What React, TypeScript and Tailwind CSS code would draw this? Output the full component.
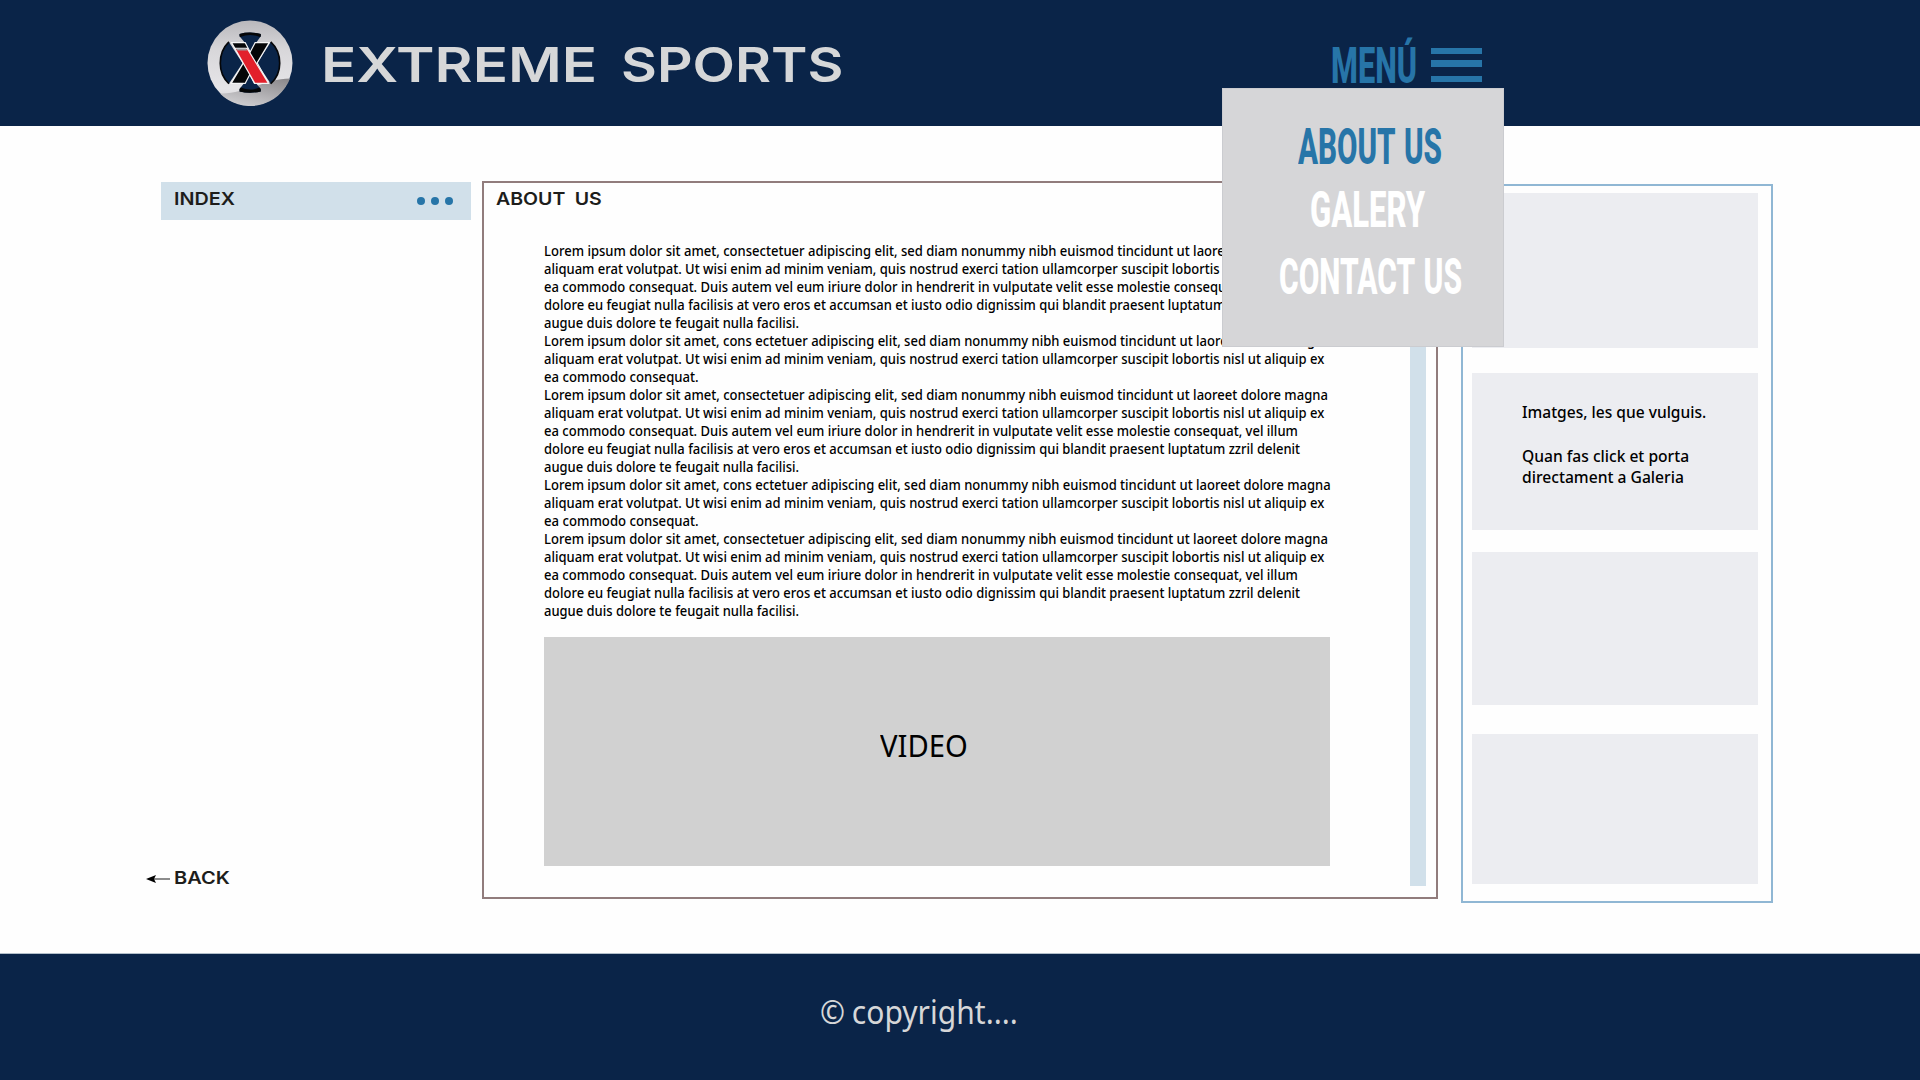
import { useLayoutEffect, useRef, useState } from "react";
import clsx from "clsx";

/** One line of text, stretched or condensed to fill the given width. */
function Fit({ width, className, children }: { width: number; className?: string; children: string }) {
  const ref = useRef<HTMLSpanElement>(null);
  const [scale, setScale] = useState(1);
  useLayoutEffect(() => {
    if (ref.current) setScale(width / ref.current.offsetWidth);
  }, [width]);
  return (
    <div className={clsx("shrink-0 whitespace-nowrap", className)} style={{ width }}>
      <span ref={ref} className="inline-block origin-left align-top" style={{ transform: `scaleX(${scale})` }}>
        {children}
      </span>
    </div>
  );
}

function Logo() {
  return (
    <svg viewBox="52 60 257 259" className="h-[86px] w-[86px] shrink-0">
      <defs>
        <linearGradient id="ball" x1="0" y1="0" x2="0" y2="1">
          <stop offset="0" stopColor="#b9b8bc" />
          <stop offset="0.35" stopColor="#d8d7da" />
          <stop offset="0.8" stopColor="#e6e5e8" />
          <stop offset="1" stopColor="#d0cfd2" />
        </linearGradient>
        <linearGradient id="shade" x1="0.9" y1="0" x2="0.3" y2="1">
          <stop offset="0" stopColor="#8b898c" />
          <stop offset="1" stopColor="#cfced1" />
        </linearGradient>
      </defs>
      <circle cx="180.500" cy="189.500" r="128" fill="url(#ball)" />
      <path d="M90 281C160 285 230 236 301 236A128 128 0 0 1 90 281Z" fill="url(#shade)" />
      <path d="M149 102Q180 94 213 102V109L200 127L184 156H178L164 127L149 109Z" fill="#0a2448" />
      <path d="M149 102Q180 94 213 102V109L211 111Q181 99 151 111L149 109Z" fill="#050608" />
      <path d="M149 275Q180 283 213 275V268L198 250L184 222H178L163 250L149 268Z" fill="#0a2448" />
      <path d="M149 275Q180 283 213 275V268L209 263Q181 276 153 263L149 268Z" fill="#050608" />
      <path d="M117 126Q91 151 91 190Q91 227 117 252L158 190Z" fill="#0a2448" />
      <path d="M243 126Q270 151 270 190Q270 227 243 252L202 190Z" fill="#0a2448" />
      <path d="M117 126Q91 151 91 190Q91 227 117 252" fill="none" stroke="#050608" strokeWidth="5" />
      <path d="M243 126Q270 151 270 190Q270 227 243 252" fill="none" stroke="#050608" strokeWidth="5" />
      <path
        d="M128 130H165L181 160L197 130H235L200 189L233 249H195L180 220L165 249H127L163 189Z"
        fill="#050608"
        stroke="#f4f4f5"
        strokeWidth="7"
        className="[paint-order:stroke]"
      />
      <path d="M138 147H171L233 249H196Z" fill="#e2202b" stroke="#f4f4f5" strokeWidth="7" className="[paint-order:stroke]" />
      <path d="M138 146H169L172 152H142Z" fill="#9a9a9d" />
    </svg>
  );
}

const P = [
  { t: "Lorem ipsum dolor sit amet, consectetuer adipiscing elit, sed diam nonummy nibh euismod tincidunt ut laoreet dolore magna", w: 784 },
  { t: "aliquam erat volutpat. Ut wisi enim ad minim veniam, quis nostrud exerci tation ullamcorper suscipit lobortis nisl ut aliquip ex", w: 780 },
  { t: "ea commodo consequat. Duis autem vel eum iriure dolor in hendrerit in vulputate velit esse molestie consequat, vel illum", w: 754 },
  { t: "dolore eu feugiat nulla facilisis at vero eros et accumsan et iusto odio dignissim qui blandit praesent luptatum zzril delenit", w: 756 },
  { t: "augue duis dolore te feugait nulla facilisi.", w: 255 },
];
const Q = [
  { t: "Lorem ipsum dolor sit amet, cons ectetuer adipiscing elit, sed diam nonummy nibh euismod tincidunt ut laoreet dolore magna", w: 787 },
  P[1],
  { t: "ea commodo consequat.", w: 155 },
];
const LINES = [...P, ...Q, ...P, ...Q, ...P];

export default function App() {
  return (
    <div className="relative flex h-[1080px] w-[1920px] flex-col overflow-hidden bg-[#fefefe] font-['Noto_Sans',sans-serif] text-black">
      <header className="flex h-[126px] shrink-0 items-start bg-[#0a2448] pl-[207px] pt-5">
        <Logo />
        <h1 className="ml-[28px] mt-[21px] flex w-[522px] justify-between font-['Inter',sans-serif] text-[48px] font-semibold leading-[48px] text-[#d6d7d8]">
          <Fit width={276}>EXTREME</Fit>{" "}
          <Fit width={222}>SPORTS</Fit>
        </h1>
        <div className="ml-[488px] mt-[21px] flex items-start text-[#2775a8]">
          <Fit width={86} className="pt-px font-['Roboto',sans-serif] text-[50px] font-extrabold leading-[48px]">MENÚ</Fit>
          <div className="ml-[14px] mt-[7px] flex w-[51px] flex-col">
            <div className="h-[6px] bg-[#2775a8]" />
            <div className="mt-[6px] h-[7px] bg-[#2775a8]" />
            <div className="mt-[9px] h-[6px] bg-[#2775a8]" />
          </div>
        </div>
      </header>

      <main className="flex h-[827px] shrink-0 items-start pl-[146px]">
        <aside className="flex h-[762px] w-[325px] shrink-0 flex-col justify-between pt-[56px]">
          <div className="ml-[15px] flex h-[38px] items-start justify-between bg-[#d1e0ea] pl-[13px] pr-[18px]">
            <Fit width={61} className="mt-[7px] font-['Inter',sans-serif] text-[17.500px] font-semibold leading-5 text-[#1d1d1b]">INDEX</Fit>
            <div className="mt-[15px] flex gap-[6px]">
              {[0, 1, 2].map((n) => (
                <div key={n} className="h-2 w-2 rounded-full bg-[#2775a8]" />
              ))}
            </div>
          </div>
          <div className="flex items-start">
            <svg viewBox="0 0 24 10" className="mt-[6px] h-[10px] w-6">
              <path d="M8 5H24" stroke="#666" strokeWidth="1.500" />
              <path d="M0 5L10 1L8 5L10 9Z" fill="#000" />
            </svg>
            <Fit width={56} className="ml-1 font-['Inter',sans-serif] text-[17.500px] font-semibold leading-5 text-[#1d1d1b]">BACK</Fit>
          </div>
        </aside>

        <section className="ml-[11px] mt-[55px] flex h-[718px] w-[956px] shrink-0 border-2 border-[#917c7c]">
          <div className="w-[846px] pl-[12px]">
            <Fit width={106} className="mt-[6px] font-['Inter',sans-serif] text-[17.500px] font-semibold leading-5 text-[#1d1d1b] [word-spacing:4px]">
              ABOUT US
            </Fit>
            <div className="ml-[48px] mt-[32px] w-[790px] text-[14.500px] font-medium leading-[18px]">
              {LINES.map((l, i) => (
                <Fit key={i} width={l.w}>{l.t}</Fit>
              ))}
            </div>
            <div className="ml-[48px] mt-[18px] flex h-[229px] w-[786px] items-start bg-[#d1d1d1] pl-[336px] pt-[88px]">
              <Fit width={88} className="text-[31.500px] leading-[40px]">VIDEO</Fit>
            </div>
          </div>
          <div className="ml-[80px] mt-[12px] h-[691px] w-4 bg-[#d1e0ea]" />
        </section>

        <aside className="ml-[23px] mt-[58px] flex h-[719px] w-[312px] shrink-0 flex-col border-2 border-[#90b7d4] pl-[9px] pt-[7px]">
          <div className="h-[155px] w-[286px] bg-[#ecedf1]" />
          <div className="mt-[25px] h-[157px] w-[286px] bg-[#ecedf1] pl-[50px] pt-[28px] text-[17px] font-medium leading-[22px]">
            <Fit width={184}>Imatges, les que vulguis.</Fit>
            <div className="mt-[22px]">
              <Fit width={167}>Quan fas click et porta</Fit>
              <Fit width={162} className="-mt-px">directament a Galeria</Fit>
            </div>
          </div>
          <div className="mt-[22px] h-[153px] w-[286px] bg-[#ecedf1]" />
          <div className="mt-[29px] h-[150px] w-[286px] bg-[#ecedf1]" />
        </aside>
      </main>

      <footer className="flex grow items-start border-t border-[#b3bfca] bg-[#0a2448] pl-[820px] pt-[38px] text-[32px] leading-[40px] text-[#d6d7d8]">
        <Fit width={198} className="[word-spacing:-1px]">© copyright....</Fit>
      </footer>

      <nav className="absolute left-[1222px] top-[88px] flex h-[259px] w-[282px] flex-col items-center border border-[#cbccd0] bg-[#d6d6d8] pt-[34px] font-['Roboto',sans-serif] text-[50px] font-extrabold leading-[48px] text-white [word-spacing:3px]">
        <Fit width={144} className="ml-[13px] text-[#2775a8]">ABOUT US</Fit>
        <Fit width={115} className="ml-[9px] mt-[15px]">GALERY</Fit>
        <Fit width={183} className="ml-[15px] mt-[19px]">CONTACT US</Fit>
      </nav>
    </div>
  );
}
